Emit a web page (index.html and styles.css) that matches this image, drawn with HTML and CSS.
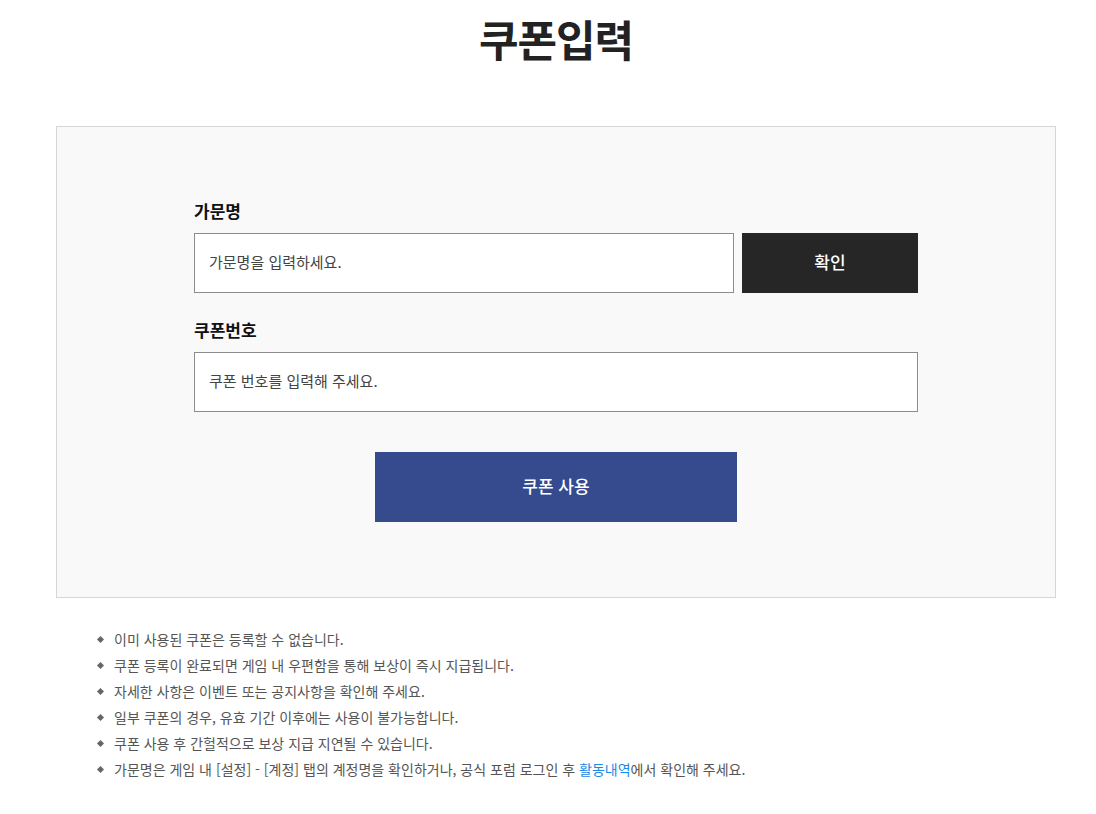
FILE: index.html
```html
<!DOCTYPE html>
<html lang="ko">
<head>
<meta charset="utf-8">
<link rel="stylesheet" href="styles.css">
</head>
<body>
<div class="page">
  <h1 class="title">쿠폰입력</h1>
  <div class="panel">
    <div class="form">
      <div class="field">
        <label class="label">가문명</label>
        <div class="row">
          <div class="input grow">가문명을 입력하세요.</div>
          <button class="btn-dark">확인</button>
        </div>
      </div>
      <div class="field">
        <label class="label">쿠폰번호</label>
        <div class="row">
          <div class="input grow">쿠폰 번호를 입력해 주세요.</div>
        </div>
      </div>
      <div class="submit-row">
        <button class="btn-primary">쿠폰 사용</button>
      </div>
    </div>
  </div>
  <ul class="notes">
    <li>이미 사용된 쿠폰은 등록할 수 없습니다.</li>
    <li>쿠폰 등록이 완료되면 게임 내 우편함을 통해 보상이 즉시 지급됩니다.</li>
    <li>자세한 사항은 이벤트 또는 공지사항을 확인해 주세요.</li>
    <li>일부 쿠폰의 경우, 유효 기간 이후에는 사용이 불가능합니다.</li>
    <li>쿠폰 사용 후 간헐적으로 보상 지급 지연될 수 있습니다.</li>
    <li>가문명은 게임 내 [설정] - [계정] 탭의 계정명을 확인하거나, 공식 포럼 로그인 후 <a class="link" href="#">활동내역</a>에서 확인해 주세요.</li>
  </ul>
</div>
</body>
</html>
```

FILE: styles.css
```css
* { box-sizing: border-box; }
html, body { margin: 0; padding: 0; background: #fff; }
body {
  font-family: "Noto Sans CJK KR", "Noto Sans", sans-serif;
  color: #222;
}
.page {
  width: 1000px;
  margin-left: 56px;
}
.title {
  margin: 0;
  padding-top: 7px;
  text-align: center;
  font-size: 43px;
  font-weight: 700;
  line-height: 63px;
  color: #222;
  letter-spacing: -1px;
}
.panel {
  margin-top: 56px;
  background: #f9f9f9;
  border: 1px solid #d6d6d6;
  height: 472px;
  padding-top: 70px;
}
.form {
  width: 724px;
  margin: 0 auto;
}
.field { margin-bottom: 23px; }
.label {
  display: block;
  font-size: 17px;
  font-weight: 700;
  color: #111;
  line-height: 28px;
  margin-bottom: 8px;
}
.row { display: flex; gap: 8px; }
.input {
  height: 60px;
  border: 1px solid #8c8c8c;
  background: #fff;
  padding: 0 14px 3px;
  display: flex;
  align-items: center;
  font-size: 15px;
  color: #444;
}
.grow { flex: 1; }
.btn-dark {
  width: 176px;
  height: 60px;
  border: 0;
  background: #262626;
  color: #fff;
  font-family: inherit;
  font-size: 17px;
  font-weight: 500;
  padding: 0 0 3px;
}
.submit-row {
  display: flex;
  justify-content: center;
  margin-top: 40px;
}
.btn-primary {
  width: 362px;
  height: 70px;
  border: 0;
  background: #354b8e;
  color: #fff;
  font-family: inherit;
  font-size: 17px;
  font-weight: 500;
  padding: 0 0 3px;
}
.notes {
  list-style: none;
  margin: 28px 0 0 0;
  padding: 0 0 0 58px;
}
.notes li {
  position: relative;
  font-size: 14px;
  line-height: 26px;
  color: #555;
}
.notes li::before {
  content: "";
  position: absolute;
  left: -16px;
  top: 11px;
  width: 5px;
  height: 5px;
  background: #666;
  transform: rotate(45deg);
}
.link { color: #1a8ae5; text-decoration: none; }
```
